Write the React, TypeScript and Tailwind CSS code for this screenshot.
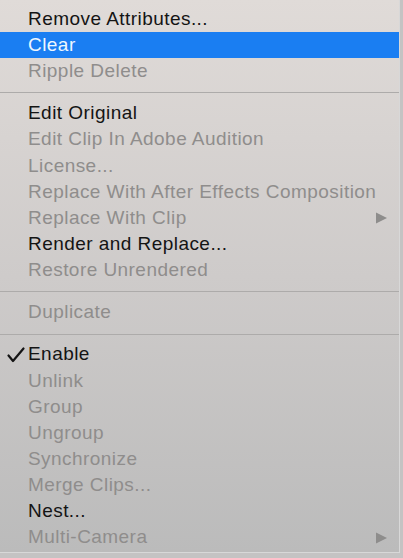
import React from 'react';

type Item = {
  label: string;
  enabled?: boolean;
  active?: boolean;
  checked?: boolean;
  submenu?: boolean;
};

const groups: Item[][] = [
  [
    { label: 'Remove Attributes...', enabled: true },
    { label: 'Clear', enabled: true, active: true },
    { label: 'Ripple Delete' },
  ],
  [
    { label: 'Edit Original', enabled: true },
    { label: 'Edit Clip In Adobe Audition' },
    { label: 'License...' },
    { label: 'Replace With After Effects Composition' },
    { label: 'Replace With Clip', submenu: true },
    { label: 'Render and Replace...', enabled: true },
    { label: 'Restore Unrendered' },
  ],
  [{ label: 'Duplicate' }],
  [
    { label: 'Enable', enabled: true, checked: true },
    { label: 'Unlink' },
    { label: 'Group' },
    { label: 'Ungroup' },
    { label: 'Synchronize' },
    { label: 'Merge Clips...' },
    { label: 'Nest...', enabled: true },
    { label: 'Multi-Camera', submenu: true },
  ],
];

const MenuRow: React.FC<{ item: Item }> = ({ item }) => {
  const color = item.active
    ? 'text-[#eef7ff] bg-[#1a7ef2]'
    : item.enabled
      ? 'text-[#141414]'
      : 'text-[#8f8d8c]';

  return (
    <div className={`relative flex items-center h-[26.15px] pl-[28px] pr-[12px] ${color}`}>
      {item.checked && (
        <svg
          width="18"
          height="16"
          viewBox="0 0 18 16"
          className="absolute left-[7px] top-[5px]"
        >
          <path
            d="M1.5 8.5 L6 14 L16.5 1.5"
            fill="none"
            stroke="#141414"
            strokeWidth="2.2"
            strokeLinecap="round"
            strokeLinejoin="round"
          />
        </svg>
      )}
      <span className="flex-1 whitespace-nowrap">{item.label}</span>
      {item.submenu && (
        <svg width="11" height="12" viewBox="0 0 11 12">
          <path d="M0 0.5 L11 6 L0 11.5 Z" fill="#8e8d8c" />
        </svg>
      )}
    </div>
  );
};

const App: React.FC = () => {
  return (
    <div className="w-[403px] h-[558px] overflow-hidden bg-[#c4c3c3]">
      <div className="w-[400px] h-[553px] pt-[6px] bg-gradient-to-b from-[#e0dbd8] via-[#cecbca] to-[#bbbbbb] border-r border-b border-[#d8d8d8] text-[19px] tracking-[0.45px] font-['Liberation_Sans',Arial,sans-serif]">
        {groups.map((group, gi) => (
          <div key={gi}>
            {gi > 0 && <div className="mt-[8px] mb-[7px] h-px bg-[#adabaa]" />}
            {group.map((item) => (
              <MenuRow key={item.label} item={item} />
            ))}
          </div>
        ))}
      </div>
    </div>
  );
};

export default App;
